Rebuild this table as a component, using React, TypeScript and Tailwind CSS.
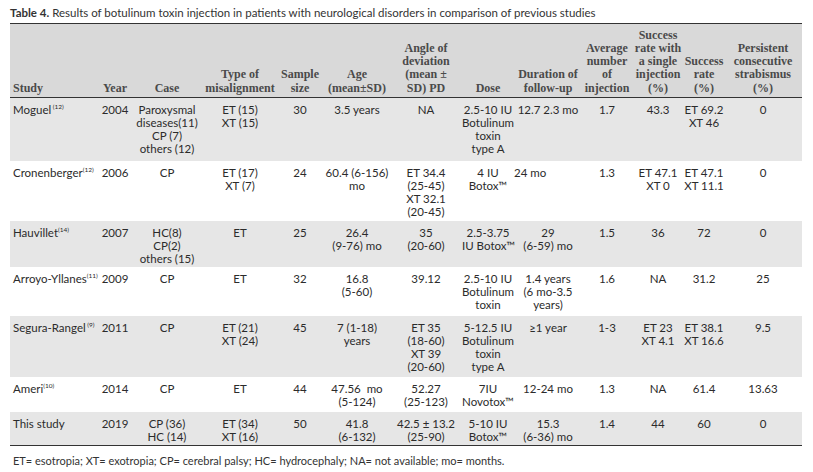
import React from 'react';

const cols = 'grid grid-cols-[90px_30px_74px_72px_48px_66px_72px_52px_68px_50px_52px_40px_78px]';

const headers: string[][] = [
  ['Study'],
  ['Year'],
  ['Case'],
  ['Type of', 'misalignment'],
  ['Sample', 'size'],
  ['Age', '(mean±SD)'],
  ['Angle of', 'deviation', '(mean ±', 'SD) PD'],
  ['Dose'],
  ['Duration of', 'follow-up'],
  ['Average', 'number', 'of', 'injection'],
  ['Success', 'rate with', 'a single', 'injection', '(%)'],
  ['Success', 'rate', '(%)'],
  ['Persistent', 'consecutive', 'strabismus', '(%)'],
];

interface Row {
  study: string;
  ref: string;
  gap?: boolean;
  h: string;
  gray: boolean;
  cells: string[][];
}

const rows: Row[] = [
  {
    study: 'Moguel', ref: '(12)', gap: true, h: 'h-[63px]', gray: true,
    cells: [['2004'], ['Paroxysmal', 'diseases(11)', 'CP (7)', 'others (12)'], ['ET (15)', 'XT (15)'], ['30'], ['3.5 years'], ['NA'], ['2.5-10 IU', 'Botulinum', 'toxin', 'type A'], ['12.7 2.3 mo'], ['1.7'], ['43.3'], ['ET 69.2', 'XT 46'], ['0']],
  },
  {
    study: 'Cronenberger', ref: '(12)', h: 'h-[60px]', gray: false,
    cells: [['2006'], ['CP'], ['ET (17)', 'XT (7)'], ['24'], ['60.4 (6-156)', 'mo'], ['ET 34.4', '(25-45)', 'XT 32.1', '(20-45)'], ['4 IU', 'Botox™'], ['24 mo'], ['1.3'], ['ET 47.1', 'XT 0'], ['ET 47.1', 'XT 11.1'], ['0']],
  },
  {
    study: 'Hauvillet', ref: '(14)', h: 'h-[46px]', gray: true,
    cells: [['2007'], ['HC(8)', 'CP(2)', 'others (15)'], ['ET'], ['25'], ['26.4', '(9-76) mo'], ['35', '(20-60)'], ['2.5-3.75', 'IU Botox™'], ['29', '(6-59) mo'], ['1.5'], ['36'], ['72'], ['0']],
  },
  {
    study: 'Arroyo-Yllanes', ref: '(11)', h: 'h-[49px]', gray: false,
    cells: [['2009'], ['CP'], ['ET'], ['32'], ['16.8', '(5-60)'], ['39.12'], ['2.5-10 IU', 'Botulinum', 'toxin'], ['1.4 years', '(6 mo-3.5', 'years)'], ['1.6'], ['NA'], ['31.2'], ['25']],
  },
  {
    study: 'Segura-Rangel', ref: '(9)', gap: true, h: 'h-[61px]', gray: true,
    cells: [['2011'], ['CP'], ['ET (21)', 'XT (24)'], ['45'], ['7 (1-18)', 'years'], ['ET 35', '(18-60)', 'XT 39', '(20-60)'], ['5-12.5 IU', 'Botulinum', 'toxin', 'type A'], ['≥1 year'], ['1-3'], ['ET 23', 'XT 4.1'], ['ET 38.1', 'XT 16.6'], ['9.5']],
  },
  {
    study: 'Ameri', ref: '(10)', h: 'h-[35px]', gray: false,
    cells: [['2014'], ['CP'], ['ET'], ['44'], ['47.56  mo', '(5-124)'], ['52.27', '(25-123)'], ['7IU', 'Novotox™'], ['12-24 mo'], ['1.3'], ['NA'], ['61.4'], ['13.63']],
  },
  {
    study: 'This study', ref: '', h: 'h-[33px]', gray: true,
    cells: [['2019'], ['CP (36)', 'HC (14)'], ['ET (34)', 'XT (16)'], ['50'], ['41.8', '(6-132)'], ['42.5 ± 13.2', '(25-90)'], ['5-10 IU', 'Botox™'], ['15.3', '(6-36) mo'], ['1.4'], ['44'], ['60'], ['0']],
  },
];

function Lines({ lines }: { lines: string[] }) {
  return (
    <>
      {lines.map((l, i) => (
        <div key={i} className="whitespace-pre">{l}</div>
      ))}
    </>
  );
}

export default function App() {
  return (
    <div className="w-[813px] h-[472px] bg-white px-[10px] pt-[6px] text-[#2b2b2b] font-['Lato','Liberation_Sans',sans-serif]">
      <p className="text-[11.5px] leading-[14px] text-[#333]">
        <span className="font-bold">Table 4.</span> Results of botulinum toxin injection in patients with neurological disorders in comparison of previous studies
      </p>

      <div className="mt-[3px] w-[792px] border-t-[1.5px] border-[#333]">
        <div className={`${cols} h-[74px] bg-[#d9d9d9] border-b-[1.5px] border-[#333] items-end pb-[2px] text-[12px] leading-[13.3px] font-bold text-[#4a4a4a] font-['Liberation_Serif',serif]`}>
          {headers.map((h, i) => (
            <div key={i} className={i === 0 ? 'pl-[3px]' : 'text-center whitespace-nowrap'}>
              <Lines lines={h} />
            </div>
          ))}
        </div>

        {rows.map((r) => (
          <div
            key={r.study}
            className={`${cols} ${r.h} ${r.gray ? 'bg-[#e6e6e6]' : 'bg-white'} items-start pt-[5px] text-[11.5px] leading-[13px]`}
          >
            <div className="pl-[3px] whitespace-nowrap">
              {r.study}
              {r.ref && (
                <sup className="text-[6.5px] top-[-5px]">
                  {r.gap ? ' ' : ''}
                  {r.ref}
                </sup>
              )}
            </div>
            {r.cells.map((c, i) => (
              <div
                key={i}
                className={`text-center whitespace-nowrap ${r.study === 'Cronenberger' && i === 7 ? 'pr-[36px]' : ''}`}
              >
                <Lines lines={c} />
              </div>
            ))}
          </div>
        ))}

        <div className="border-t-[1.5px] border-[#333]" />
      </div>

      <p className="mt-[8px] pl-[3px] text-[11px] leading-[14px] text-[#333]">
        ET= esotropia; XT= exotropia; CP= cerebral palsy; HC= hydrocephaly; NA= not available; mo= months.
      </p>
    </div>
  );
}
